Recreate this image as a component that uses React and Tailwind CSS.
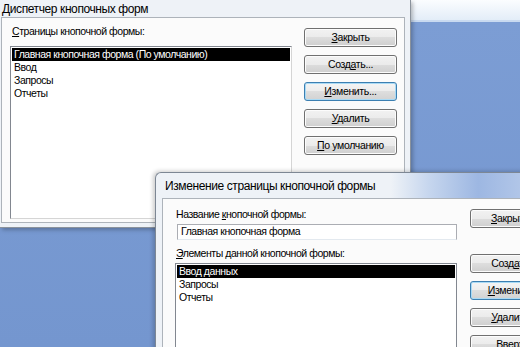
import React from "react";

const body = { fontFamily: '"Liberation Sans", Arial, sans-serif' };
const title = { fontFamily: '"Liberation Sans", Arial, sans-serif' };

function Btn({ children, focus, narrow }) {
  const w = narrow ? " w-[80px]" : " w-[93px]";
  return (
    <div
      className={
        (focus
          ? "h-[19px] shrink-0 rounded-[3px] border border-[#3c7fb1] shadow-[inset_0_0_0_1px_#a9daf5] bg-[linear-gradient(to_bottom,#f4f4f4_0%,#ececec_50%,#dedede_50%,#d2d2d2_100%)] flex items-center justify-center text-[10.5px] tracking-[-0.35px] leading-none text-black whitespace-nowrap"
          : "h-[19px] shrink-0 rounded-[3px] border border-[#707070] shadow-[inset_0_0_0_1px_#fcfcfc] bg-[linear-gradient(to_bottom,#f2f2f2_0%,#ebebeb_50%,#dddddd_50%,#cfcfcf_100%)] flex items-center justify-center text-[10.5px] tracking-[-0.35px] leading-none text-black whitespace-nowrap") + w
      }
      style={body}
    >
      <span>{children}</span>
    </div>
  );
}

function Item({ children, sel }) {
  return (
    <div
      className={
        sel
          ? "h-[13px] bg-black text-white pl-[2px] text-[10.5px] tracking-[-0.45px] leading-[13px] whitespace-nowrap"
          : "h-[13px] text-black pl-[2px] text-[10.5px] tracking-[-0.45px] leading-[13px] whitespace-nowrap"
      }
    >
      {children}
    </div>
  );
}

export default function App() {
  return (
    <div className="relative w-[520px] h-[347px] overflow-hidden bg-[#7a9bd3] flex flex-col">
      {/* desktop background */}
      <div className="h-[20px] shrink-0 bg-[linear-gradient(to_bottom,#fbfdff,#e3edf8)]" />
      <div className="h-[2px] shrink-0 bg-[#c9daf0]" />
      <div className="flex-1 bg-[linear-gradient(to_bottom,#7c9dd4,#7496cf)]" />

      {/* Window 1 */}
      <div className="absolute left-0 top-0 w-[411px] h-[228px] bg-[#eef2f7] border-r border-b border-[#8a929c] flex flex-col shadow-[2px_2px_4px_rgba(0,0,0,0.25)]">
        <div className="h-[17px] shrink-0 pl-[2px] flex items-center text-[12px] tracking-[-0.4px] text-black leading-none" style={title}>
          Диспетчер кнопочных форм
        </div>
        <div className="flex-1 mr-[5px] mb-[4px] ml-[1px] border border-[#adb3ba] bg-[#fbfbfb] flex" style={body}>
          <div className="w-[290px] shrink-0 flex flex-col pl-[8px] pt-[7px] pb-[3px]">
            <div className="text-[10.5px] tracking-[-0.45px] leading-[13px] text-black pl-[2px] h-[21px]">
              <u>С</u>траницы кнопочной формы:
            </div>
            <div className="flex-1 border border-[#828790] border-r-[#d5d5d5] border-b-[#d5d5d5] bg-white p-[1px]">
              <Item sel>Главная кнопочная форма (По умолчанию)</Item>
              <Item>Ввод</Item>
              <Item>Запросы</Item>
              <Item>Отчеты</Item>
            </div>
          </div>
          <div className="flex flex-col gap-[8px] pl-[12px] pt-[10px]">
            <Btn><u>З</u>акрыть</Btn>
            <Btn>Созд<u>а</u>ть...</Btn>
            <Btn focus><u>И</u>зменить...</Btn>
            <Btn><u>У</u>далить</Btn>
            <Btn><u>П</u>о умолчанию</Btn>
          </div>
        </div>
      </div>

      {/* Window 2 */}
      <div className="absolute left-[155px] top-[172px] w-[380px] h-[190px] rounded-tl-[6px] border-l border-t border-[#7d8794] bg-[linear-gradient(to_right,#eef2f7_0%,#eef2f7_62%,#c6d6ee_72%,#9db7e2_85%,#b8cbea_100%)] flex flex-col shadow-[-2px_-1px_4px_rgba(0,0,0,0.2)]">
        <div className="h-[25px] shrink-0 pl-[9px] flex items-center text-[12px] tracking-[-0.4px] text-black leading-none" style={title}>
          Изменение страницы кнопочной формы
        </div>
        <div className="flex-1 ml-[6px] border-l border-t border-[#adb3ba] bg-[#fbfbfb] flex" style={body}>
          <div className="w-[294px] shrink-0 flex flex-col pl-[12px] pt-[9px]">
            <div className="text-[10.5px] tracking-[-0.45px] leading-[13px] text-black pl-[1px] h-[16px]">
              Название <u>к</u>нопочной формы:
            </div>
            <div className="h-[16px] ml-[2px] border border-[#abadb3] border-b-[#e3e9ef] bg-white text-[10.5px] tracking-[-0.45px] leading-[13px] pl-[3px] text-black">
              Главная кнопочная форма
            </div>
            <div className="text-[10.5px] tracking-[-0.45px] leading-[13px] text-black pl-[1px] pt-[7px] h-[23px]">
              <u>Э</u>лементы данной кнопочной формы:
            </div>
            <div className="flex-1 border border-[#828790] bg-white p-[1px]">
              <Item sel>Ввод данных</Item>
              <Item>Запросы</Item>
              <Item>Отчеты</Item>
            </div>
          </div>
          <div className="flex flex-col pl-[13px] pt-[10px]">
            <Btn narrow><u>З</u>акрыть</Btn>
            <div className="h-[26px] shrink-0" />
            <div className="flex flex-col gap-[8px]">
              <Btn narrow>Созд<u>а</u>ть</Btn>
              <Btn narrow focus><u>И</u>зменить</Btn>
              <Btn narrow><u>У</u>далить</Btn>
              <Btn narrow>Вв<u>е</u>рх</Btn>
            </div>
          </div>
        </div>
      </div>
    </div>
  );
}
